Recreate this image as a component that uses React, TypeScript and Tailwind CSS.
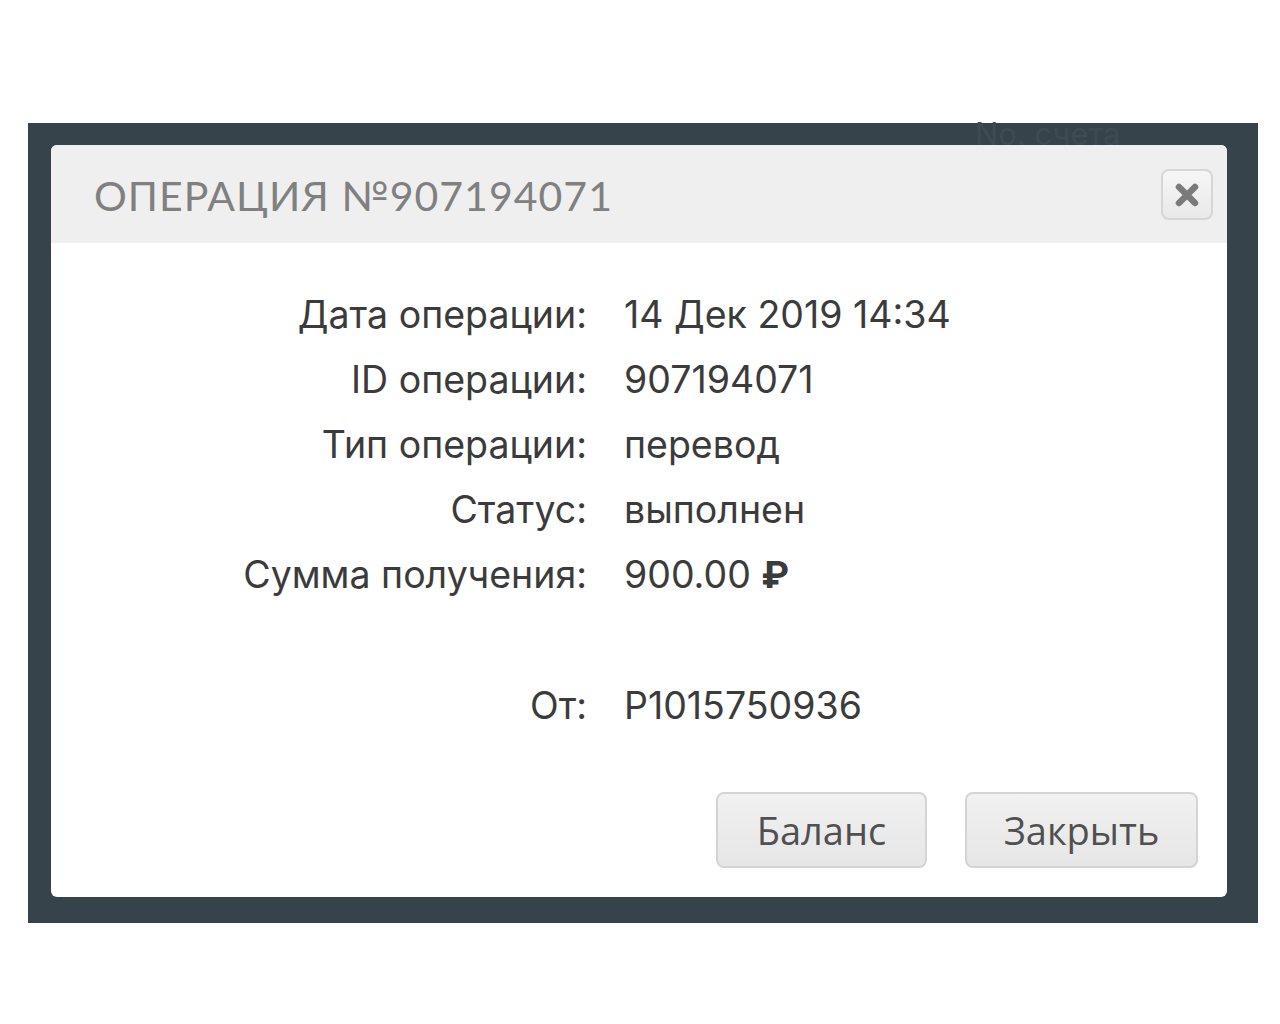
import React from "react";

const rows: [string, React.ReactNode][] = [
  ["Дата операции:", "14 Дек 2019 14:34"],
  ["ID операции:", "907194071"],
  ["Тип операции:", "перевод"],
  ["Статус:", "выполнен"],
  [
    "Сумма получения:",
    <>
      900.00 <span className="font-bold">₽</span>
    </>,
  ],
];

export default function App() {
  return (
    <div className="w-[1280px] h-[1024px] bg-white pt-[123px]">
      <div className="relative ml-[28px] w-[1230px] h-[800px] bg-[#36434b] pt-[22px] pl-[23px]">
        <div
          className="absolute left-[947px] top-[-5px] text-[31px] text-[#3e4b53] leading-none"
          style={{ fontFamily: "Inter, sans-serif" }}
        >
          No. счета
        </div>
        <div className="relative w-[1176px] h-[752px] bg-white rounded-[6px] overflow-hidden flex flex-col">
          <div className="h-[98px] bg-[#efefef] flex items-center justify-between pl-[43px] pr-[14px]">
            <div
              className="text-[41px] text-[#808080] tracking-[0.025em] leading-none pt-[2px]"
              style={{ fontFamily: "Lato, sans-serif" }}
            >
              ОПЕРАЦИЯ №907194071
            </div>
            <div className="w-[52px] h-[51px] rounded-[8px] border-2 border-[#d6d6d6] bg-gradient-to-b from-[#f6f6f6] to-[#e9e9e9] flex items-center justify-center mt-[1px]">
              <svg width="26" height="26" viewBox="0 0 26 26">
                <path d="M5 5 L21 21 M21 5 L5 21" stroke="#7a7a7a" strokeWidth="6.5" strokeLinecap="round" />
              </svg>
            </div>
          </div>
          <div
            className="flex-1 flex flex-col pt-[40px] text-[#3b3b3b] text-[37.5px]"
            style={{ fontFamily: "Inter, sans-serif" }}
          >
            <div className="grid grid-cols-[536px_1fr] gap-x-[37px]">
              {rows.map(([l, v]) => (
                <React.Fragment key={l}>
                  <div className="h-[65px] flex items-center justify-end">{l}</div>
                  <div className="h-[65px] flex items-center whitespace-pre">{v}</div>
                </React.Fragment>
              ))}
              <div className="h-[65px]" />
              <div className="h-[65px]" />
              <div className="h-[66px] flex items-center justify-end">От:</div>
              <div className="h-[66px] flex items-center">P1015750936</div>
            </div>
            <div
              className="mt-auto flex justify-end gap-[38px] pr-[29px] pb-[29px]"
              style={{ fontFamily: "'Open Sans', sans-serif" }}
            >
              <div className="w-[211px] h-[76px] rounded-[8px] border-2 border-[#d4d4d4] bg-gradient-to-b from-[#f1f1f1] to-[#e6e6e6] flex items-center justify-center text-[38px] text-[#505050]">
                Баланс
              </div>
              <div className="w-[233px] h-[76px] rounded-[8px] border-2 border-[#d4d4d4] bg-gradient-to-b from-[#f1f1f1] to-[#e6e6e6] flex items-center justify-center text-[38px] text-[#505050]">
                Закрыть
              </div>
            </div>
          </div>
        </div>
      </div>
    </div>
  );
}
